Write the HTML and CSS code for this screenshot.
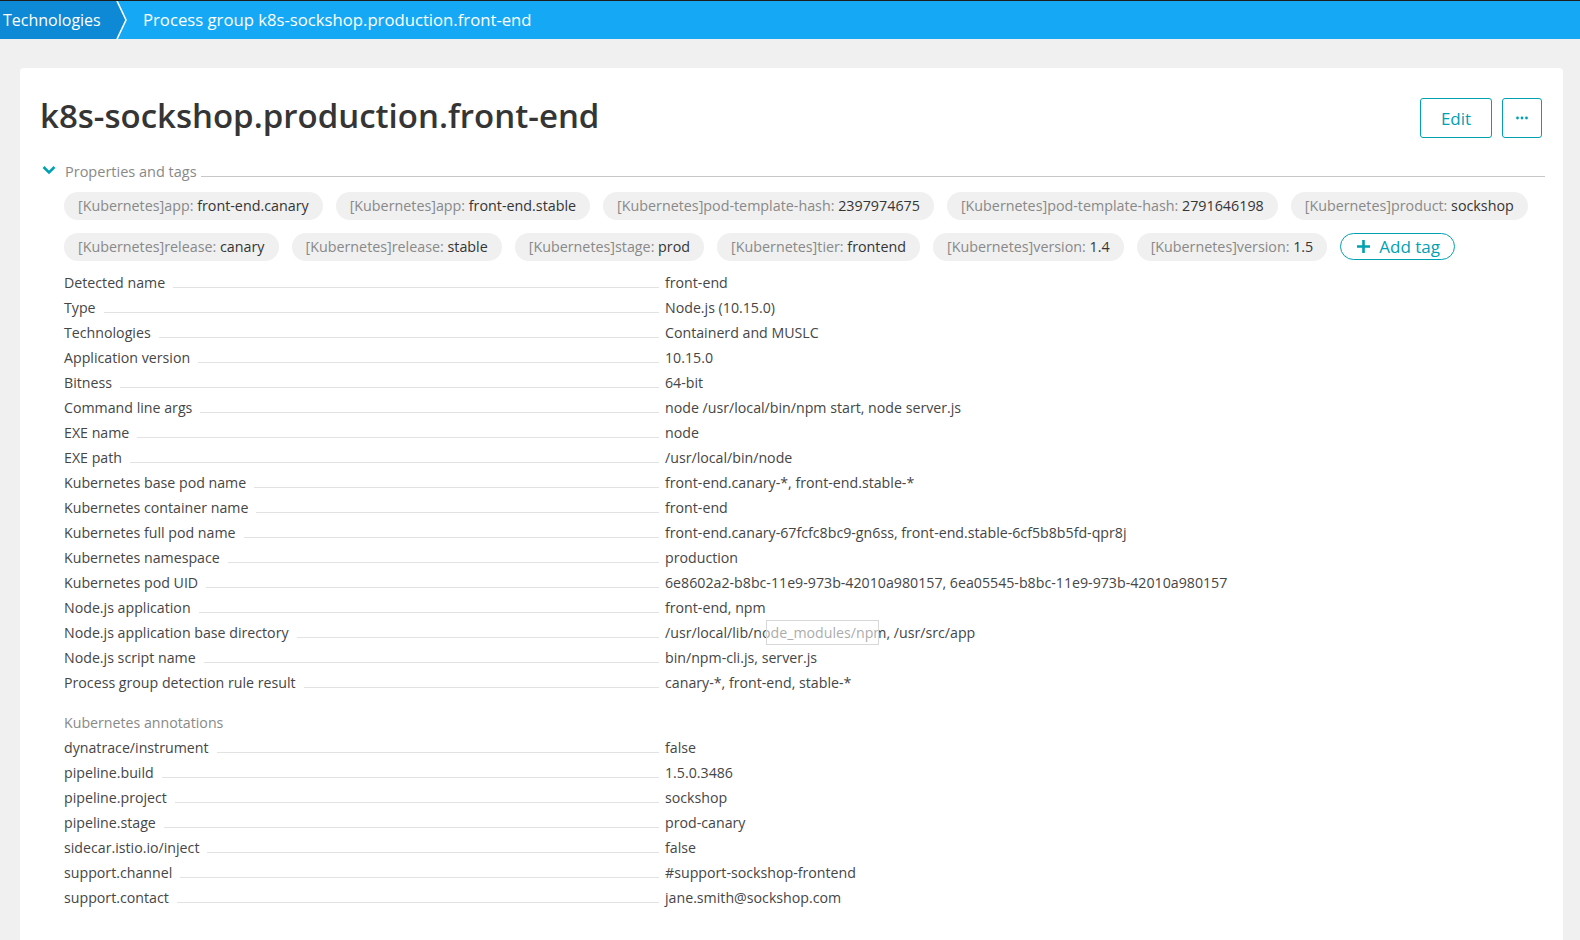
FILE: index.html
```html
<!DOCTYPE html>
<html>
<head>
<meta charset="utf-8">
<link rel="stylesheet" href="styles.css">
</head>
<body>
<div class="topbar">
  <div class="crumb crumb-first">Technologies</div>
  <svg class="crumb-sep" width="14" height="38" viewBox="0 0 14 38"><polygon points="0,0 2,0 11,19 2,38 0,38" fill="#0d89d5"/><polyline points="2,0 11,19 2,38" fill="none" stroke="#fff" stroke-width="1.6"/></svg>
  <div class="crumb crumb-current">Process group k8s-sockshop.production.front-end</div>
</div>
<main class="page">
  <section class="card">
    <header class="card-head">
      <h1 class="title">k8s-sockshop.production.front-end</h1>
      <div class="actions">
        <button class="btn btn-edit">Edit</button>
        <button class="btn btn-more" aria-label="More"><svg width="14" height="4" viewBox="0 0 14 4"><circle cx="2.5" cy="2" r="1.4" fill="#00a1b2"/><circle cx="7" cy="2" r="1.4" fill="#00a1b2"/><circle cx="11.5" cy="2" r="1.4" fill="#00a1b2"/></svg></button>
      </div>
    </header>
    <div class="section-head">
      <svg class="chev" width="14" height="10" viewBox="0 0 14 10"><polyline points="1.5,2 7,7.5 12.5,2" fill="none" stroke="#00a1b2" stroke-width="2.6"/></svg>
      <span class="section-title">Properties and tags</span>
      <span class="section-rule"></span>
    </div>
    <div class="section-body">
      <div class="tags">
        <span class="tag"><span class="tk">[Kubernetes]app: </span><span class="tv">front-end.canary</span></span>
        <span class="tag"><span class="tk">[Kubernetes]app: </span><span class="tv">front-end.stable</span></span>
        <span class="tag"><span class="tk">[Kubernetes]pod-template-hash: </span><span class="tv">2397974675</span></span>
        <span class="tag"><span class="tk">[Kubernetes]pod-template-hash: </span><span class="tv">2791646198</span></span>
        <span class="tag"><span class="tk">[Kubernetes]product: </span><span class="tv">sockshop</span></span>
        <span class="tag"><span class="tk">[Kubernetes]release: </span><span class="tv">canary</span></span>
        <span class="tag"><span class="tk">[Kubernetes]release: </span><span class="tv">stable</span></span>
        <span class="tag"><span class="tk">[Kubernetes]stage: </span><span class="tv">prod</span></span>
        <span class="tag"><span class="tk">[Kubernetes]tier: </span><span class="tv">frontend</span></span>
        <span class="tag"><span class="tk">[Kubernetes]version: </span><span class="tv">1.4</span></span>
        <span class="tag"><span class="tk">[Kubernetes]version: </span><span class="tv">1.5</span></span>
        <button class="add-tag"><svg width="15" height="15" viewBox="0 0 15 15"><path d="M7.5 1v13M1 7.5h13" stroke="#00a1b2" stroke-width="2.6" fill="none"/></svg><span>Add tag</span></button>
      </div>

      <div class="props">
        <div class="row"><div class="k"><span>Detected name</span><i class="lead"></i></div><div class="v">front-end</div></div>
        <div class="row"><div class="k"><span>Type</span><i class="lead"></i></div><div class="v">Node.js (10.15.0)</div></div>
        <div class="row"><div class="k"><span>Technologies</span><i class="lead"></i></div><div class="v">Containerd and MUSLC</div></div>
        <div class="row"><div class="k"><span>Application version</span><i class="lead"></i></div><div class="v">10.15.0</div></div>
        <div class="row"><div class="k"><span>Bitness</span><i class="lead"></i></div><div class="v">64-bit</div></div>
        <div class="row"><div class="k"><span>Command line args</span><i class="lead"></i></div><div class="v">node /usr/local/bin/npm start, node server.js</div></div>
        <div class="row"><div class="k"><span>EXE name</span><i class="lead"></i></div><div class="v">node</div></div>
        <div class="row"><div class="k"><span>EXE path</span><i class="lead"></i></div><div class="v">/usr/local/bin/node</div></div>
        <div class="row"><div class="k"><span>Kubernetes base pod name</span><i class="lead"></i></div><div class="v">front-end.canary-*, front-end.stable-*</div></div>
        <div class="row"><div class="k"><span>Kubernetes container name</span><i class="lead"></i></div><div class="v">front-end</div></div>
        <div class="row"><div class="k"><span>Kubernetes full pod name</span><i class="lead"></i></div><div class="v">front-end.canary-67fcfc8bc9-gn6ss, front-end.stable-6cf5b8b5fd-qpr8j</div></div>
        <div class="row"><div class="k"><span>Kubernetes namespace</span><i class="lead"></i></div><div class="v">production</div></div>
        <div class="row"><div class="k"><span>Kubernetes pod UID</span><i class="lead"></i></div><div class="v">6e8602a2-b8bc-11e9-973b-42010a980157, 6ea05545-b8bc-11e9-973b-42010a980157</div></div>
        <div class="row"><div class="k"><span>Node.js application</span><i class="lead"></i></div><div class="v">front-end, npm</div></div>
        <div class="row"><div class="k"><span>Node.js application base directory</span><i class="lead"></i></div><div class="v v-tip">/usr/local/lib/node_modules/npm, /usr/src/app<span class="tooltip"></span></div></div>
        <div class="row"><div class="k"><span>Node.js script name</span><i class="lead"></i></div><div class="v">bin/npm-cli.js, server.js</div></div>
        <div class="row"><div class="k"><span>Process group detection rule result</span><i class="lead"></i></div><div class="v">canary-*, front-end, stable-*</div></div>
      </div>

      <div class="sub-head">Kubernetes annotations</div>
      <div class="props">
        <div class="row"><div class="k"><span>dynatrace/instrument</span><i class="lead"></i></div><div class="v">false</div></div>
        <div class="row"><div class="k"><span>pipeline.build</span><i class="lead"></i></div><div class="v">1.5.0.3486</div></div>
        <div class="row"><div class="k"><span>pipeline.project</span><i class="lead"></i></div><div class="v">sockshop</div></div>
        <div class="row"><div class="k"><span>pipeline.stage</span><i class="lead"></i></div><div class="v">prod-canary</div></div>
        <div class="row"><div class="k"><span>sidecar.istio.io/inject</span><i class="lead"></i></div><div class="v">false</div></div>
        <div class="row"><div class="k"><span>support.channel</span><i class="lead"></i></div><div class="v">#support-sockshop-frontend</div></div>
        <div class="row"><div class="k"><span>support.contact</span><i class="lead"></i></div><div class="v">jane.smith@sockshop.com</div></div>
      </div>
    </div>
  </section>
</main>
</body>
</html>
```

FILE: styles.css
```css
* { box-sizing: border-box; }
html, body {
  margin: 0;
  padding: 0;
  height: 100%;
  overflow: hidden;
  background: #f0f0f0;
  font-family: "Open Sans", "Noto Sans", sans-serif;
  color: #454646;
}
.topbar {
  display: flex;
  align-items: center;
  height: 39px;
  border-top: 1px solid #1d1d1d;
  background: #15a8f5;
  color: #fff;
  font-size: 16.7px;
}
.crumb { line-height: 38px; white-space: nowrap; }
.crumb-first {
  background: #0d89d5;
  padding-left: 3px;
  width: 115px;
  height: 38px;
  font-size: 16px;
}
.crumb-sep { display: block; flex: none; }
.crumb-current { padding-left: 14px; }

.page { padding: 29px 17px 0 20px; }
.card {
  background: #fff;
  border-radius: 4px;
  padding: 30px 18px 0 20px;
  min-height: 900px;
}
.card-head {
  display: flex;
  align-items: center;
  justify-content: space-between;
  height: 40px;
}
.title {
  margin: -4px 0 0 0;
  font-size: 33px;
  font-weight: 600;
  color: #353535;
  line-height: 40px;
}
.actions { display: flex; gap: 10px; margin-right: 3px; }
.btn {
  display: flex;
  align-items: center;
  justify-content: center;
  height: 40px;
  border: 1px solid #00a1b2;
  border-radius: 3px;
  background: #fff;
  color: #00a1b2;
  font-family: "Open Sans", sans-serif;
  font-size: 17px;
  padding: 0;
  cursor: pointer;
}
.btn-edit { width: 72px; }
.btn-more { width: 40px; }
.btn-more svg { display: block; }

.section-head {
  display: flex;
  align-items: center;
  margin-top: 23px;
  height: 20px;
  padding-left: 2px;
}
.chev { display: block; margin-right: 9px; margin-top: -3px; }
.section-title { font-size: 14.5px; color: #898989; white-space: nowrap; }
.section-rule { flex: 1; border-bottom: 1px solid #c8c8c8; margin-left: 4px; margin-top: 10px; }

.section-body { padding-left: 24px; }
.tags {
  display: flex;
  flex-wrap: wrap;
  gap: 13px 13px;
  margin-top: 11px;
}
.tag {
  display: inline-block;
  height: 28px;
  line-height: 28px;
  padding: 0 14px;
  border-radius: 14px;
  background: #f0f0f0;
  font-size: 14.3px;
  white-space: pre;
}
.tk { color: #898989; }
.tv { color: #353535; }
.add-tag {
  display: inline-flex;
  align-items: center;
  gap: 8px;
  height: 27px;
  padding: 0 14px 0 15px;
  border: 1.5px solid #00a1b2;
  border-radius: 14px;
  background: #fff;
  color: #00a1b2;
  font-family: "Open Sans", sans-serif;
  font-size: 17px;
}
.add-tag svg { display: block; }

.props { margin-top: 9px; }
.row {
  display: grid;
  grid-template-columns: 595px 1fr;
  column-gap: 6px;
  height: 25px;
  line-height: 25px;
  font-size: 14.2px;
}
.k { display: flex; min-width: 0; }
.k span { white-space: nowrap; }
.lead {
  flex: 1;
  align-self: flex-end;
  margin: 0 0 7px 8px;
  border-bottom: 1px solid #e2e2e2;
}
.v { white-space: nowrap; }
.v-tip { position: relative; }
.tooltip {
  position: absolute;
  left: 101px;
  top: 0;
  width: 113px;
  height: 25px;
  border: 1px solid #d8d8d8;
  background: rgba(255, 255, 255, 0.55);
}
.sub-head {
  margin-top: 15px;
  height: 25px;
  line-height: 25px;
  font-size: 14.2px;
  color: #898989;
}
.sub-head + .props { margin-top: 0; }
```
